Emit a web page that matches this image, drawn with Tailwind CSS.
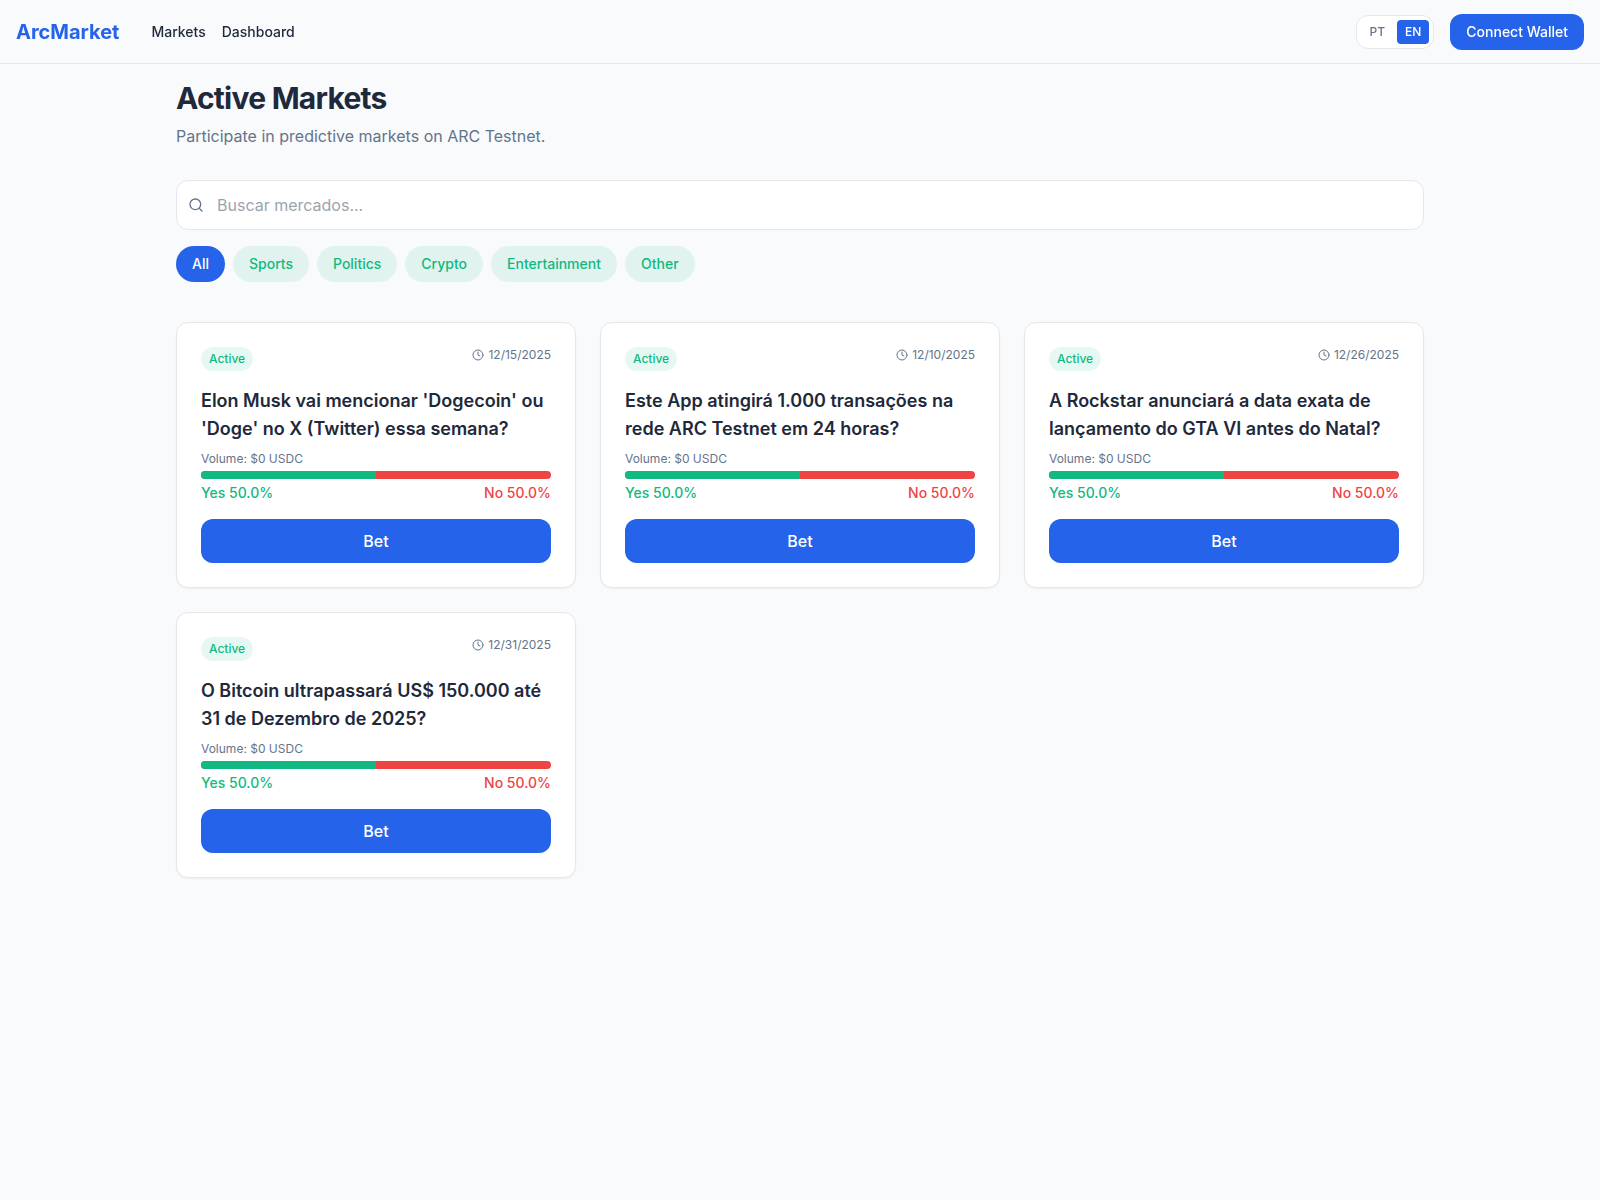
<!DOCTYPE html>
<html lang="en">
<head>
<meta charset="UTF-8">
<title>ArcMarket</title>
<meta name="viewport" content="width=device-width,initial-scale=1">
<script src="https://cdn.jsdelivr.net/npm/@tailwindcss/browser@4"></script>
</head>
<body class="min-h-screen bg-[#f9fafc] text-[#1e293b] font-['Inter',sans-serif] antialiased">

<header class="sticky top-0 z-50 flex h-16 items-center justify-between border-b border-[#e5e7eb] bg-[#f9fafc]/95 px-4 backdrop-blur">
  <div class="flex items-center gap-8">
    <a href="#" class="text-xl font-bold text-[#2563eb]">ArcMarket</a>
    <nav class="flex gap-4 text-sm font-medium">
      <a href="#markets">Markets</a>
      <a href="#dashboard">Dashboard</a>
    </nav>
  </div>
  <div class="flex items-center gap-4">
    <div class="flex gap-1 rounded-xl border border-[#e5e7eb] bg-white p-1 text-xs font-medium">
      <button type="button" class="rounded-sm px-2 py-1 text-[#64748b]">PT</button>
      <button type="button" class="rounded-sm bg-[#2563eb] px-2 py-1 text-white">EN</button>
    </div>
    <button type="button" class="rounded-xl bg-[#2563eb] px-4 py-2 text-sm font-medium text-white">Connect Wallet</button>
  </div>
</header>

<main id="markets" class="mx-auto max-w-7xl px-4 py-4">
  <h1 class="mb-2 text-3xl font-bold tracking-tight">Active Markets</h1>
  <p class="mb-8 text-[#64748b]">Participate in predictive markets on ARC Testnet.</p>

  <div class="relative mb-4">
    <svg class="absolute left-3 top-1/2 size-4 -translate-y-1/2 text-[#64748b]" viewBox="0 0 24 24" fill="none" stroke="currentColor" stroke-width="2" stroke-linecap="round" stroke-linejoin="round"><circle cx="11" cy="11" r="8"/><path d="m21 21-4.3-4.3"/></svg>
    <input type="text" aria-label="Buscar mercados" placeholder="Buscar mercados..."
           class="block w-full rounded-xl border border-[#e5e7eb] bg-white py-3 pl-10 pr-4 placeholder:text-[#9ca3af] focus:outline-none">
  </div>

  <div id="filters" class="mb-10 flex flex-wrap gap-2 text-sm font-medium">
    <button type="button" class="rounded-full bg-[#2563eb] px-4 py-2 text-white">All</button>
    <button type="button" class="rounded-full bg-[#10b981]/10 px-4 py-2 text-[#10b981]">Sports</button>
    <button type="button" class="rounded-full bg-[#10b981]/10 px-4 py-2 text-[#10b981]">Politics</button>
    <button type="button" class="rounded-full bg-[#10b981]/10 px-4 py-2 text-[#10b981]">Crypto</button>
    <button type="button" class="rounded-full bg-[#10b981]/10 px-4 py-2 text-[#10b981]">Entertainment</button>
    <button type="button" class="rounded-full bg-[#10b981]/10 px-4 py-2 text-[#10b981]">Other</button>
  </div>

  <section id="marketGrid" class="grid gap-6 md:grid-cols-2 lg:grid-cols-3"></section>
</main>

<script>
const markets = [
  { title: "Elon Musk vai mencionar 'Dogecoin' ou 'Doge' no X (Twitter) essa semana?", date: "12/15/2025", volume: 0, yes: 50 },
  { title: "Este App atingirá 1.000 transações na rede ARC Testnet em 24 horas?", date: "12/10/2025", volume: 0, yes: 50 },
  { title: "A Rockstar anunciará a data exata de lançamento do GTA VI antes do Natal?", date: "12/26/2025", volume: 0, yes: 50 },
  { title: "O Bitcoin ultrapassará US$ 150.000 até 31 de Dezembro de 2025?", date: "12/31/2025", volume: 0, yes: 50 }
];

document.getElementById("marketGrid").innerHTML = markets.map(m => `
  <article class="rounded-xl border border-[#e5e7eb] bg-white p-6 shadow-xs">
    <div class="mb-4 flex items-start justify-between text-xs">
      <span class="rounded-full bg-[#10b981]/10 px-2 py-1 font-medium text-[#10b981]">Active</span>
      <span class="flex items-center gap-1 text-[#64748b]">
        <svg class="size-3" viewBox="0 0 24 24" fill="none" stroke="currentColor" stroke-width="2" stroke-linecap="round" stroke-linejoin="round"><circle cx="12" cy="12" r="10"/><path d="M12 6v6l4 2"/></svg>
        ${m.date}
      </span>
    </div>
    <h2 class="mb-2 text-lg font-semibold">${m.title}</h2>
    <p class="mb-1 text-xs text-[#64748b]">Volume: $${m.volume} USDC</p>
    <div class="mb-1 flex h-2 overflow-hidden rounded-full bg-[#ef4444]">
      <div class="bg-[#10b981]" style="width:${m.yes}%"></div>
    </div>
    <div class="mb-4 flex justify-between text-sm font-medium">
      <span class="text-[#10b981]">Yes ${m.yes.toFixed(1)}%</span>
      <span class="text-[#ef4444]">No ${(100 - m.yes).toFixed(1)}%</span>
    </div>
    <button type="button" class="w-full rounded-xl bg-[#2563eb] py-[10px] font-medium text-white">Bet</button>
  </article>`).join("");
</script>
</body>
</html>
